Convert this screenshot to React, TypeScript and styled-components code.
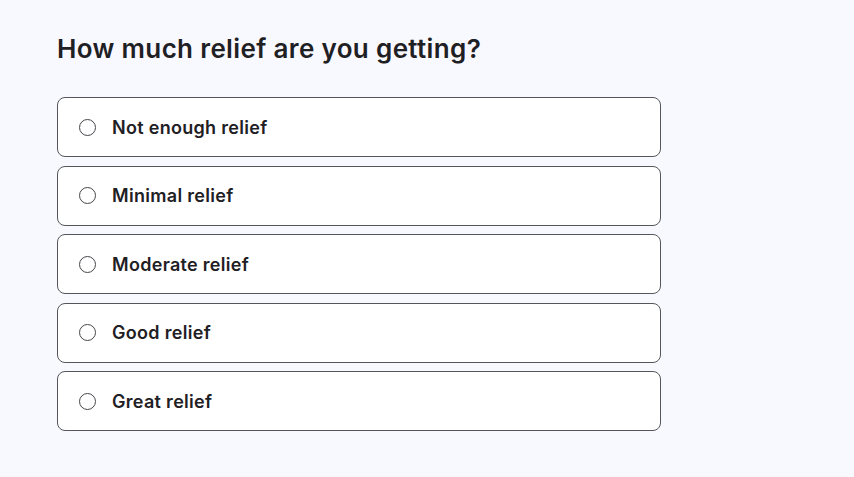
import React, { useState } from "react";
import { styled, createGlobalStyle } from "styled-components";

const GlobalStyle = createGlobalStyle`
  html, body {
    margin: 0;
    padding: 0;
    background: #f8f9fe;
    font-family: Inter, "Noto Sans", sans-serif;
    color: #202124;
  }
`;

const OPTIONS = [
  "Not enough relief",
  "Minimal relief",
  "Moderate relief",
  "Good relief",
  "Great relief",
];

const App = () => {
  const [selected, setSelected] = useState<number | null>(null);

  return (
    <>
      <GlobalStyle />
      <StyledPage>
        <StyledTitle>How much relief are you getting?</StyledTitle>
        <StyledList>
          {OPTIONS.map((label, index) => (
            <StyledOption key={label} onClick={() => setSelected(index)}>
              <StyledRadio isSelected={selected === index} />
              <StyledLabel>{label}</StyledLabel>
            </StyledOption>
          ))}
        </StyledList>
      </StyledPage>
    </>
  );
};

export default App;

const StyledPage = styled.div`
  padding: 33px 0 0 57px;
  width: 604px;
  min-height: 444px;
`;

const StyledTitle = styled.h1`
  margin: 0 0 32px;
  font-size: 26px;
  line-height: 32px;
  font-weight: 600;
  letter-spacing: 0.35px;
  color: #1f2024;
`;

const StyledList = styled.div`
  display: flex;
  flex-direction: column;
  gap: 8.5px;
`;

const StyledOption = styled.div`
  display: flex;
  align-items: center;
  gap: 16px;
  box-sizing: border-box;
  height: 60px;
  padding: 0 0 0 21px;
  background: #ffffff;
  border: 1px solid #55565a;
  border-radius: 8px;
  cursor: pointer;
`;

const StyledRadio = styled.span<{ isSelected?: boolean }>`
  box-sizing: border-box;
  width: 17px;
  height: 17px;
  border-radius: 50%;
  border: 1.5px solid #44464a;
  background: ${({ isSelected }) =>
    isSelected ? "radial-gradient(#202124 45%, transparent 50%)" : "#fff"};
`;

const StyledLabel = styled.span`
  font-size: 18px;
  font-weight: 600;
  letter-spacing: 0.3px;
  color: #1f2024;
`;
